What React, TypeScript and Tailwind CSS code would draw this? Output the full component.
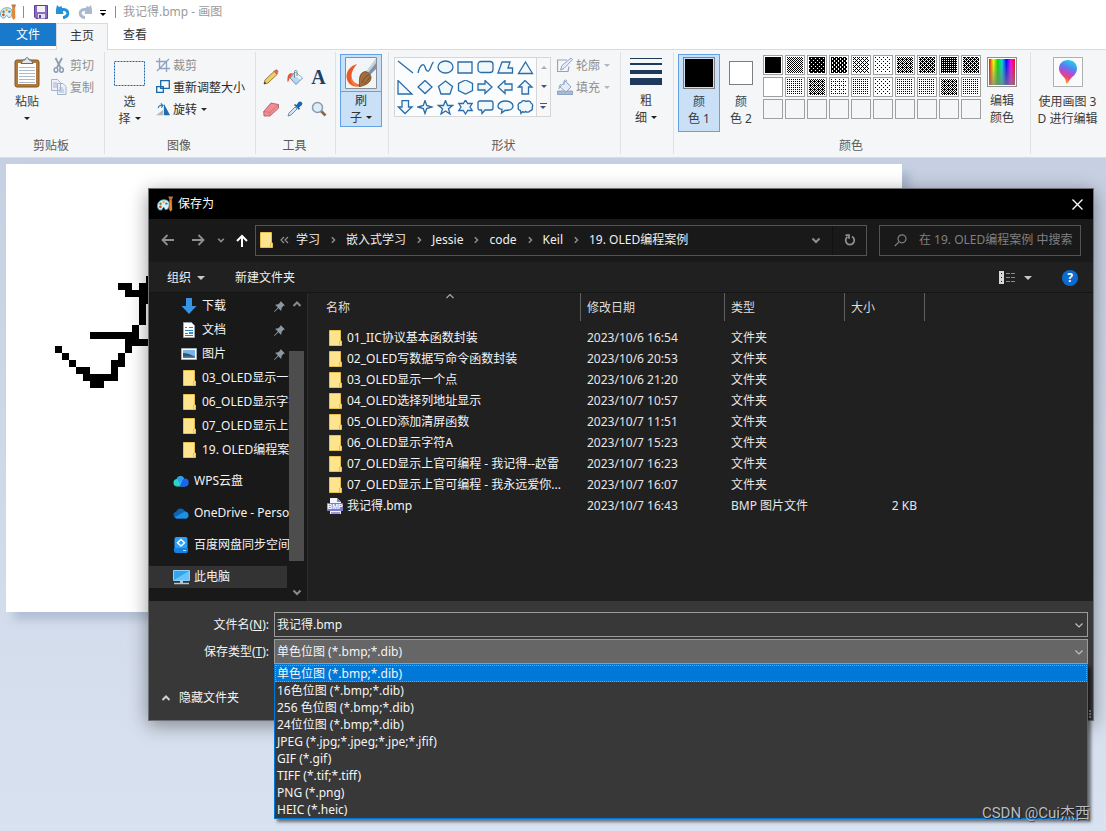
import React, { useState } from "react";

const FONT = "font-['Noto_Sans','Noto_Sans_CJK_SC',sans-serif]";

/* ---------- small shared pieces ---------- */

function Caret({ className = "", large }: { className?: string; large?: boolean }) {
  return (
    <svg viewBox="0 0 6 3" className={"shrink-0 " + (large ? "h-1 w-2 " : "h-[3px] w-[6px] ") + className} aria-hidden="true">
      <path d="M0 0h6L3 3z" fill="currentColor" />
    </svg>
  );
}

function Chevron({ dir, className = "", width = 2, small }: { dir: "up" | "down" | "right"; className?: string; width?: number; small?: boolean }) {
  const d = dir === "up" ? "M1.500 7l3.500-3.500L8.500 7" : dir === "down" ? "M1.500 3.500L5 7l3.500-3.500" : "M3.500 1.500L7 5 3.500 8.500";
  return (
    <svg viewBox="0 0 10 10" className={"shrink-0 " + (small ? "h-2 w-2 " : "h-[10px] w-[10px] ") + className} aria-hidden="true">
      <path d={d} fill="none" stroke="currentColor" strokeWidth={width} />
    </svg>
  );
}

function PaletteIcon() {
  return (
    <svg viewBox="0 0 17 16" className="h-4 w-4 shrink-0" aria-hidden="true">
      <path d="M.5 10c0-4.500 3.700-6.500 7-6.500s5.500 1.500 5.500 4.500c0 4-1.500 6-3.500 6-1.800 0-1-2.300-2.500-2.300s-.9 2.800-2.700 2.800C2 14.500.5 13 .5 10z" fill="#d9f0f8" stroke="#4f9bbd" strokeWidth=".9" />
      <circle cx="3.600" cy="11" r="1.400" fill="#e2432e" />
      <circle cx="3.800" cy="7.800" r="1.300" fill="#3fa63b" />
      <circle cx="7" cy="5.800" r="1.300" fill="#f2b01e" />
      <circle cx="10" cy="7.600" r="1.300" fill="#3d7dd0" />
      <path d="M12 0h5l-1 3.500h-2.800z" fill="#b77a48" />
      <path d="M13.300 3.500h2.400l.3 10.500-1.500 2-1.500-2z" fill="#ee8a24" stroke="#bd5b12" strokeWidth=".4" />
    </svg>
  );
}

function Folder() {
  return (
    <svg viewBox="0 0 13 16" className="h-4 w-[13px] shrink-0" aria-hidden="true">
      <path d="M.5.5h11v10.500h1v4.500H.5z" fill="#ffe48f" stroke="#e7bf4b" />
      <path d="M10.500 11v4.500" stroke="#e7bf4b" />
    </svg>
  );
}

/* ---------- ribbon ---------- */

function Group({ label, width, children }: { label?: string; width: string; children: React.ReactNode }) {
  return (
    <section className={"flex h-[102px] shrink-0 flex-col border-r border-[#e0e1e3] " + width}>
      <div className="flex flex-1">{children}</div>
      <div className="h-[18px] pr-[2px] text-center leading-5 text-[#5a5a5a]">{label}</div>
    </section>
  );
}

function SmallButton({ icon, text, disabled, caret }: { icon: React.ReactNode; text: string; disabled?: boolean; caret?: boolean }) {
  return (
    <button type="button" disabled={disabled} className={"flex h-[22px] items-center gap-[3px] whitespace-nowrap " + (disabled ? "text-[#8e8f91]" : "text-[#2b2b2b]")}>
      {icon}
      {text}
      {caret && <Caret className="ml-px" />}
    </button>
  );
}

const blue = { fill: "#f1f8fc", stroke: "#2a6ca8", strokeWidth: 1.3 } as const;

const SHAPES: { name: string; el: React.ReactNode }[] = [
  { name: "直线", el: <path d="M1 1l15 12" /> },
  { name: "曲线", el: <path d="M1 13C3 4 7 3 8 7s3 6 5 2 2-6 3.500-7" fill="none" /> },
  { name: "椭圆形", el: <ellipse cx="8.500" cy="7" rx="7.500" ry="6" /> },
  { name: "矩形", el: <path d="M1 2h14v11H1z" /> },
  { name: "圆角矩形", el: <rect x="1" y="1.500" width="15" height="11" rx="3" /> },
  { name: "多边形", el: <path d="M5 2h8l-2 6h4.500v5H1z" /> },
  { name: "三角形", el: <path d="M8.500 2l7 11.500h-14z" /> },
  { name: "直角三角形", el: <path d="M1 .5v13.500h14z" /> },
  { name: "菱形", el: <path d="M8 .5l7 6.500-7 6.500L1 7z" /> },
  { name: "五边形", el: <path d="M8.500 1l7 5.500L13 14H4L1.500 6.500z" /> },
  { name: "六边形", el: <path d="M8.500 0l7 3.500v7l-7 3.500-7-3.500v-7z" /> },
  { name: "右箭头", el: <path d="M1 4h7V.5L15 7l-7 6.500V10H1z" /> },
  { name: "左箭头", el: <path d="M15 4H8V.5L1 7l7 6.500V10h7z" /> },
  { name: "向上箭头", el: <path d="M5 14V7H1.500L8 .5 15 7h-3.500v7z" /> },
  { name: "向下箭头", el: <path d="M5 .5V7H1.500L8 13.500 15 7h-3.500V.5z" /> },
  { name: "四角星形", el: <path d="M8 .5l1.700 5L15 7l-5.300 1.500-1.700 5-1.700-5L1 7l5.300-1.500z" /> },
  { name: "五角星形", el: <path d="M8.500.5l2 5h5l-4 3.200 1.500 5.300-4.500-3L4 14l1.500-5.300-4-3.200h5z" /> },
  { name: "六角星形", el: <path d="M8.500 0l2.200 3.500h4.500L13 7l2.200 3.500h-4.500L8.500 14l-2.200-3.500H1.800L4 7 1.800 3.500h4.500z" /> },
  { name: "圆角矩形标注", el: <path d="M3 1h11q2 0 2 2v5q0 2-2 2H8l-3 3.500L4.500 10H3q-2 0-2-2V3q0-2 2-2z" /> },
  { name: "椭圆形标注", el: <path d="M4.500 13l.5-3.500C2.500 9 1 7.500 1 6c0-3 3.500-5 7.500-5S16 3 16 6s-3.500 4.500-8 4.500z" /> },
  { name: "云形标注", el: <path d="M4 2.500C5.500 0 8 .5 9 1.500c2-1 4.500-.5 5 1.500 2 1 2 3 1.200 4.200.8 2-.7 3.600-2.200 3.600-1 1.700-3.500 1.700-4.500.7-1 .9-2.500.7-3.200.1L4 13.500l-.7-3C1.500 10 .5 8.500 1.500 7 .5 5 1.500 2.700 4 2.500z" /> },
];

/* 4x4 dither tiles; "1" is ink */
const TILES = [
  "1111111111111111",
  "1010010110100101",
  "1111110111110111",
  "1110101110111110",
  "1010010010100001",
  "1000000000100000",
  "1010010111100101",
  "1011010111100101",
  "1111101011111010",
  "1110010110110101",
  "0000000000000000",
  "1010000010100000",
  "1010010111100101",
  "1000000010100000",
  "1010000010100000",
  "1000000000100000",
  "1010000010100000",
  "1010000010100000",
  "1010010110110101",
  "1010000010100000",
];

function Swatch({ tile, id }: { tile?: string; id: number }) {
  return (
    <button type="button" aria-label={"颜色 " + (id + 1)} className={"flex h-5 w-5 items-center justify-center border border-[#a0a0a0] " + (tile ? "bg-white" : "bg-[#f5f6f7]")}>
      {tile && (
        <svg viewBox="0 0 16 16" className="h-4 w-4" shapeRendering="crispEdges" aria-hidden="true">
          <defs>
            <pattern id={"dither" + id} width="4" height="4" patternUnits="userSpaceOnUse">
              {tile.split("").map((c, i) => (c === "1" ? <rect key={i} x={i % 4} y={Math.floor(i / 4)} width="1" height="1" fill="#000" /> : null))}
            </pattern>
          </defs>
          <rect width="16" height="16" fill={"url(#dither" + id + ")"} />
        </svg>
      )}
    </button>
  );
}

function Ribbon() {
  return (
    <div className="flex overflow-hidden border-y border-[#dadbdc] bg-[#f5f6f7] pb-[3px] pt-[2px] leading-[17px] text-[#3b3b3b]">
      <Group label="剪贴板" width="w-[105px]">
        <button type="button" className="ml-[6px] flex w-[42px] flex-col items-center pt-[5px]">
          <svg viewBox="0 0 26 31" className="h-[31px] w-[26px]" aria-hidden="true">
            <rect x="1" y="3" width="24" height="27" rx="2" fill="#b07a3c" stroke="#845620" />
            <path d="M4 6h18v21H4z" fill="#fff" />
            <path d="M5 10.500h16M5 13.500h16M5 16.500h16M5 19.500h16M5 22.500h16M5 25.500h16" stroke="#a9bccb" />
            <path d="M7 6.500h12L17 3h-2c0-3-4-3-4 0H9z" fill="#e4e6e8" stroke="#666b70" />
          </svg>
          <span className="mt-[5px]">粘贴</span>
          <Caret className="mt-[7px] text-[#222]" />
        </button>
        <div className="ml-[3px] pt-[2px]">
          <SmallButton disabled text="剪切" icon={
            <svg viewBox="0 0 16 16" className="h-4 w-4" fill="none" stroke="#8d9cb4" aria-hidden="true">
              <path d="M4.500 1l5 9.500M11 1l-5 9.500" strokeWidth="1.800" />
              <ellipse cx="5" cy="13" rx="1.800" ry="2.200" strokeWidth="1.500" /><ellipse cx="10.500" cy="13" rx="1.800" ry="2.200" strokeWidth="1.500" />
            </svg>} />
          <SmallButton disabled text="复制" icon={
            <svg viewBox="0 0 16 16" className="h-4 w-4" fill="#eef2f8" stroke="#a3b3cd" aria-hidden="true">
              <path d="M.5.5h6l3 3v8h-9zM6.500 4.500h5.500l3 3v8H6.500z" />
              <path d="M2 4h4M2 6h4M2 8h4M8 9h4M8 11h5M8 13h5" />
            </svg>} />
        </div>
      </Group>

      <Group label="图像" width="w-[151px]">
        <button type="button" className="ml-[9px] flex w-[31px] flex-col items-center pt-[9px]">
          <svg viewBox="0 0 31 25" className="h-[25px] w-[31px]" aria-hidden="true">
            <path d="M.5.5h30v24H.5z" fill="none" stroke="#1a66a8" strokeDasharray="2 1" />
          </svg>
          <span className="mt-[7px]">选</span>
          <span className="flex items-center gap-1">择<Caret className="text-[#222]" /></span>
        </button>
        <div className="ml-[11px] pt-[2px]">
          <SmallButton disabled text="裁剪" icon={
            <svg viewBox="0 0 14 14" className="h-[14px] w-[14px]" fill="none" stroke="#8da3c2" strokeWidth="1.300" aria-hidden="true">
              <path d="M0 3.500h10.500V14M3.500 0v10.500H14M1 13L13 1" />
            </svg>} />
          <SmallButton text="重新调整大小" icon={
            <svg viewBox="0 0 14 14" className="h-[14px] w-[14px]" fill="#f5f9fc" stroke="#1a66a8" strokeWidth="1.300" aria-hidden="true">
              <path d="M.7 6.700h6.600v5.600H.7zM4.700.7h8.600v7.600H4.700z" />
            </svg>} />
          <SmallButton text="旋转" caret icon={
            <svg viewBox="0 0 16 14" className="h-[14px] w-[14px]" aria-hidden="true">
              <path d="M0 14l8-6v6z" fill="#b5b9bd" /><path d="M9 1v13h7z" fill="#1d6db0" />
              <path d="M2.500 6C3 3 5 2.500 7 3M5.500.5L8 3 6 5.500" fill="none" stroke="#2a7dc4" strokeWidth="1.300" />
            </svg>} />
        </div>
      </Group>

      <Group label="工具" width="w-[80px]">
        <div className="ml-[3px] grid h-16 grid-cols-3 pt-[9px]">
          <button type="button" aria-label="铅笔" className="flex h-8 w-[23px] items-center justify-center">
            <svg viewBox="0 0 16 16" className="h-4 w-4" aria-hidden="true">
              <path d="M1 15l1-4L11.500 2l3 3L5 14z" fill="#f2cf66" stroke="#7d6330" strokeWidth=".8" />
              <path d="M11 2.500L12.500 1q1-.8 2 .3t.3 2L13.500 5z" fill="#e0686a" stroke="#a44" strokeWidth=".5" />
              <path d="M1 15l.7-2.300 1.600 1.600z" fill="#222" />
            </svg>
          </button>
          <button type="button" aria-label="用颜色填充" className="flex h-8 w-6 items-center justify-center">
            <svg viewBox="0 0 16 16" className="h-4 w-4" aria-hidden="true">
              <path d="M8 3l7.500 6L9 15.500 3 9z" fill="#b8d6ee" stroke="#5a87ad" strokeWidth=".9" />
              <path d="M8.500 3.600l6.500 5.200-2 2-6.500-5.200z" fill="#eaf4fb" />
              <path d="M7.500 8.500V2.500q1.200-3 2.500 0V7" fill="none" stroke="#77838e" />
              <path d="M6 4.500C2.500 3.500 0 5 .5 13c1.500 0 1.700-3.500 2.500-4.500z" fill="#e8552c" />
            </svg>
          </button>
          <button type="button" aria-label="文本" className="flex h-8 w-[23px] items-center justify-center font-['Liberation_Serif',serif] text-[20px] font-bold text-[#1f3f66]">A</button>
          <button type="button" aria-label="橡皮擦" className="flex h-8 w-[23px] items-center justify-center">
            <svg viewBox="0 0 16 16" className="h-4 w-4" aria-hidden="true">
              <path d="M.7 10.500L8 2l7.500 1.500v3.700L7 15H1z" fill="#ef8e92" stroke="#b0555a" strokeWidth=".8" />
              <path d="M.7 10.500l6.300.8 8.500-7.800M7 11.300V15" fill="none" stroke="#c76a6e" strokeWidth=".7" />
            </svg>
          </button>
          <button type="button" aria-label="颜色选取器" className="flex h-8 w-6 items-center justify-center">
            <svg viewBox="0 0 16 16" className="h-4 w-4" aria-hidden="true">
              <path d="M1 15l1-3 6-6 2 2-6 6z" fill="#d3e6f5" stroke="#56799a" strokeWidth=".8" />
              <path d="M7 4l5 5 1-1.500-1-1L15 4q1-2-.5-3T11.500 1L9.500 4 8 3z" fill="#1d66ae" />
            </svg>
          </button>
          <button type="button" aria-label="放大镜" className="flex h-8 w-[23px] items-center justify-center">
            <svg viewBox="0 0 16 16" className="h-4 w-4" aria-hidden="true">
              <path d="M10 10l4.500 4.500" stroke="#8a6646" strokeWidth="2.600" />
              <circle cx="6.500" cy="6.500" r="5" fill="#dbeefa" stroke="#8b9cb0" strokeWidth="1.500" />
            </svg>
          </button>
        </div>
      </Group>

      <Group width="w-[53px]">
        <button type="button" className="ml-1 mt-[2px] flex h-[73px] w-[42px] flex-col items-center border border-[#62a2e4] bg-[#c9e0f7]">
          <span className="flex h-[37px] w-full items-center justify-center border-b border-[#62a2e4]">
            <svg viewBox="0 0 32 32" className="h-8 w-8" aria-hidden="true">
              <path d="M.5.5h31v31H.5z" fill="#f1f5f7" stroke="#8b8f93" />
              <path d="M12 7C5 9 1.500 14 1.500 20c.5 5 4 9 9 9.500 2 .3 5 0 6-2-5 0-10-2.500-10-8C6.500 14 9 11 12 7z" fill="#ea5a27" />
              <path d="M6.500 19.500C7 25 11 27.500 17 28l-6 1.500C7 28 5 24 6.500 19.500z" fill="#f47a42" />
              <path d="M31 2v10l-6 6-4-3z" fill="#8092a8" /><path d="M31 2L21 15l2 1 8-10z" fill="#c9d3de" />
              <path d="M20 14.500c3 .5 6 3 6 6 0 5-6 8.500-12 9 1.500-3-2-13 6-15z" fill="#a06f3c" stroke="#6d4620" strokeWidth=".8" />
              <path d="M17 26c2-5 4-7 7-8M19 27c3-3 5-5 6-7" stroke="#6d4620" fill="none" strokeWidth=".8" />
            </svg>
          </span>
          <span className="text-[#333]">刷</span>
          <span className="flex items-center gap-1 text-[#333]">子<Caret className="text-[#222]" /></span>
        </button>
      </Group>

      <Group label="形状" width="w-[232px]">
        <div className="ml-[5px] mt-[5px] flex h-[60px] w-[157px] border border-[#d5d6d8] bg-[#fbfcfd]">
          <div className="grid grid-cols-7 grid-rows-[20px_20px_19px]">
            {SHAPES.map((s) => (
              <button type="button" key={s.name} aria-label={s.name} className="flex h-[19px] w-5 items-center justify-center">
                <svg viewBox="0 0 17 15" className="h-[15px] w-[17px]" {...blue} aria-hidden="true">{s.el}</svg>
              </button>
            ))}
          </div>
          <div className="ml-auto flex w-[14px] flex-col items-center justify-between border-l border-[#d5d6d8] bg-[#f8f8f9] pb-[7px] pt-2 text-[#41597c]">
            <Caret className="rotate-180 text-[#a9adb3]" />
            <Caret />
            <span className="w-[7px] border-t border-[#41597c] pt-[2px]"><Caret /></span>
          </div>
        </div>
        <div className="ml-[6px] pt-[2px]">
          {["轮廓", "填充"].map((t, i) => (
            <button type="button" disabled key={t} className="flex h-[22px] items-center text-[#8e8f91]">
              <svg viewBox="0 0 16 16" className="mr-[3px] h-4 w-4" fill="#e6edf6" stroke="#8fa3c2" aria-hidden="true">
                {i === 0 ? (
                  <><path d="M10 3H.5v11.500H11l1-5" fill="none" strokeWidth="1.200" /><path d="M3.500 13l1.500-4.500L14 1l1.500 1.500-8.500 9z" /></>
                ) : (
                  <><path d="M.5 12h15v3.500H.5z" fill="#a9b9d4" /><path d="M8.500 2L14 8l-5 5-6-5z" /><path d="M7 6V2q1.500-2 3 0M4 5q-2 1-2 5" fill="none" /></>
                )}
              </svg>
              {t}<Caret className="ml-1 text-[#b3b5b8]" />
            </button>
          ))}
        </div>
      </Group>

      <Group width="w-[53px]">
        <button type="button" className="ml-2 flex w-[34px] flex-col items-center pt-[6px]">
          <svg viewBox="0 0 32 27" className="h-[27px] w-8" fill="#1e395b" aria-hidden="true">
            <path d="M0 0h32v1H0zM0 5h32v2H0zM0 12h32v4H0zM0 20h32v7H0z" />
          </svg>
          <span className="mt-[7px]">粗</span>
          <span className="flex items-center gap-1">细<Caret className="text-[#222]" /></span>
        </button>
      </Group>

      <Group label="颜色" width="w-[357px]">
        <button type="button" className="ml-1 mt-[2px] flex h-[78px] w-[42px] flex-col items-center border border-[#62a2e4] bg-[#c9e0f7] pt-[2px]">
          <span className="h-8 w-8 border border-[#7e7e7e] bg-[#c9e0f7] p-px"><span className="block h-full bg-black" /></span>
          <span className="mt-1">颜</span>
          <span>色 1</span>
        </button>
        <button type="button" className="ml-1 flex w-[34px] flex-col items-center pt-[9px]">
          <span className="h-6 w-6 border border-[#7e7e7e] bg-white" />
          <span className="mt-2">颜</span>
          <span>色 2</span>
        </button>
        <div className="ml-[5px] mt-[3px] grid h-16 grid-cols-10 gap-[2px]">
          {Array.from({ length: 30 }, (_, i) => <Swatch key={i} id={i} tile={TILES[i]} />)}
        </div>
        <button type="button" className="ml-1 flex w-[34px] flex-col items-center pt-[5px]">
          <span className="border border-[#8f8f8f] bg-white p-px">
            <span className="block h-[26px] w-[26px] bg-[linear-gradient(to_bottom,transparent,rgba(128,128,128,0.75)),linear-gradient(to_right,#f00,#ff0_17%,#0d0_33%,#0dd_50%,#00f_67%,#f0f_84%,#f00)]" />
          </span>
          <span className="mt-[5px]">编辑</span>
          <span>颜色</span>
        </button>
      </Group>

      <button type="button" className="flex min-w-[73px] flex-1 flex-col items-center whitespace-nowrap pr-[2px] pt-[5px]">
        <span className="flex h-[30px] w-[30px] items-center justify-center border border-[#b0b0b0] bg-[#fbfbfb]">
          <svg viewBox="0 0 18 24" className="h-6 w-[18px]" aria-hidden="true">
            <defs>
              <linearGradient id="drop" x1="0.700" y1="0" x2="0.350" y2="1">
                <stop offset="0" stopColor="#16d8ee" /><stop offset=".35" stopColor="#5b7cf0" /><stop offset=".55" stopColor="#b64bd0" /><stop offset=".72" stopColor="#f2436c" /><stop offset="1" stopColor="#ffb400" />
              </linearGradient>
            </defs>
            <path d="M9 0c5 0 9 3.500 9 8.500 0 6-5 8-7 11-1 1.500-2 3-3.500 4.500-.8-2-.5-4-2-6C3.500 15.500 0 13 0 8.500 0 3.500 4 0 9 0z" fill="url(#drop)" />
          </svg>
        </span>
        <span className="mt-[6px]">使用画图 3</span>
        <span>D 进行编辑</span>
      </button>
    </div>
  );
}

function TitleBar() {
  return (
    <header className="flex h-[23px] items-center bg-white">
      <PaletteIcon />
      <span className="ml-[7px] h-3 w-px bg-[#8c8c8c]" />
      <button type="button" aria-label="保存" className="ml-[10px]">
        <svg viewBox="0 0 14 14" className="h-[14px] w-[14px]" aria-hidden="true">
          <path d="M.5.5h13v13H2l-1.500-1.500z" fill="#8b6cc4" stroke="#5c3f99" /><path d="M3 1h8v6H3z" fill="#f2f2f6" /><path d="M4 9h7v4.500H4z" fill="#e3e1ea" /><path d="M5 10h2v3H5z" fill="#5c3f99" />
        </svg>
      </button>
      <button type="button" aria-label="撤消" className="ml-2">
        <svg viewBox="0 0 14 14" className="h-[14px] w-[14px]" aria-hidden="true">
          <path d="M3 4.500h4.500q4.700.3 4.200 4.500Q11.200 12 7 12.700" fill="none" stroke="#2492d8" strokeWidth="3" /><path d="M0 4.500L1 0l2 2 2.500-1 2 8H0z" fill="#2492d8" />
        </svg>
      </button>
      <button type="button" aria-label="重做" className="ml-2">
        <svg viewBox="0 0 14 14" className="h-[14px] w-[14px] -scale-x-100" aria-hidden="true">
          <path d="M3 4.500h4.500q4.700.3 4.200 4.500Q11.200 12 7 12.700" fill="none" stroke="#a9b9cf" strokeWidth="3" /><path d="M0 4.500L1 0l2 2 2.500-1 2 8H0z" fill="#a9b9cf" />
        </svg>
      </button>
      <button type="button" aria-label="自定义快速访问工具栏" className="ml-2 mt-[3px] border-t border-black pt-[2px]"><Caret className="text-black" /></button>
      <span className="ml-[9px] h-3 w-px bg-[#8c8c8c]" />
      <h1 className="ml-[7px] text-[#9a9a9a]">我记得.bmp - 画图</h1>
    </header>
  );
}

function Tabs() {
  return (
    <nav className="flex h-[26px] bg-white text-[#333]">
      <button type="button" className="h-[23px] w-14 bg-[#1979ca] text-white">文件</button>
      <button type="button" className="relative z-10 -mb-px h-[27px] w-[52px] border border-b-0 border-[#dadbdc] bg-[#f5f6f7] pb-[2px]">主页</button>
      <button type="button" className="h-[26px] w-[54px] pb-[2px]">查看</button>
    </nav>
  );
}

/* ---------- canvas ---------- */

/* [column, row, width, height] on the 128 x 64 bitmap */
const INK = [
  [20, 16, 1, 1], [16, 17, 2, 1], [19, 17, 2, 1], [17, 18, 4, 1], [19, 19, 2, 1], [19, 20, 1, 3],
  [18, 23, 1, 1], [12, 24, 7, 1], [17, 25, 4, 1], [7, 26, 1, 1], [17, 26, 1, 1], [8, 27, 1, 1],
  [16, 27, 1, 1], [9, 28, 1, 1], [15, 28, 2, 1], [10, 29, 2, 1], [15, 29, 1, 1], [11, 30, 5, 1], [12, 31, 2, 1],
];

function Canvas() {
  return (
    <main className="flex-1 bg-linear-to-b from-[#c6d0e2] to-[#d9e2f0] pl-[6px] pt-[6px]">
      <svg viewBox="0 0 128 64" className="block h-[448px] w-[896px] bg-white shadow-[8px_8px_8px_rgba(120,140,170,0.35)]" shapeRendering="crispEdges" role="img" aria-label="画布">
        {INK.map(([x, y, w, h]) => <rect key={x + "-" + y} x={x} y={y} width={w} height={h} />)}
      </svg>
    </main>
  );
}

/* ---------- save dialog ---------- */

const CRUMBS = ["学习", "嵌入式学习", "Jessie", "code", "Keil", "19. OLED编程案例"];

function AddressBar() {
  return (
    <div className="flex h-[43px] items-center bg-[#191919] pb-[3px] pl-1 pr-3 pt-[2px] text-[#8f8f8f]">
      <button type="button" aria-label="后退" className="flex w-[30px] justify-center">
        <svg viewBox="0 0 14 12" className="h-3 w-[14px]" fill="none" stroke="currentColor" strokeWidth="1.800" aria-hidden="true"><path d="M13 6H2M6.500 1l-5 5 5 5" /></svg>
      </button>
      <button type="button" aria-label="前进" className="flex w-[30px] justify-center">
        <svg viewBox="0 0 14 12" className="h-3 w-[14px]" fill="none" stroke="currentColor" strokeWidth="1.800" aria-hidden="true"><path d="M1 6h11M7.500 1l5 5-5 5" /></svg>
      </button>
      <button type="button" aria-label="最近浏览的位置" className="flex w-4 justify-center"><Chevron dir="down" small /></button>
      <button type="button" aria-label="上移" className="flex w-[26px] justify-center text-white">
        <svg viewBox="0 0 12 13" className="h-[13px] w-3" fill="none" stroke="currentColor" strokeWidth="2" aria-hidden="true"><path d="M6 13V2M1 7l5-5 5 5" /></svg>
      </button>
      <div className="flex h-[31px] min-w-0 flex-1 items-center border border-[#535353] pl-1 text-[#f0f0f0]">
        <Folder />
        <span className="flex w-[23px] justify-center text-[#8f8f8f]">
          <svg viewBox="0 0 9 8" className="h-2 w-[9px]" fill="none" stroke="currentColor" strokeWidth="1.200" aria-hidden="true"><path d="M4 1L1 4l3 3M8 1L5 4l3 3" /></svg>
        </span>
        {CRUMBS.map((c, i) => (
          <React.Fragment key={c}>
            {i > 0 && <span className="flex w-[26px] justify-center text-[#8f8f8f]"><Chevron dir="right" small width={1.800} /></span>}
            <button type="button" className="whitespace-nowrap">{c}</button>
          </React.Fragment>
        ))}
        <button type="button" aria-label="以前的位置" className="ml-auto flex w-8 justify-center text-[#8f8f8f]"><Chevron dir="down" /></button>
        <button type="button" aria-label="刷新" className="flex h-full w-[34px] items-center justify-center border-l border-[#111] text-[#8f8f8f]">
          <svg viewBox="0 0 12 12" className="h-3 w-3" fill="none" stroke="currentColor" strokeWidth="1.800" aria-hidden="true"><path d="M8 2.500a4.300 4.300 0 1 1-4.500.3M1.500 1.200h3.500v3.600" /></svg>
        </button>
      </div>
      <label className="ml-3 flex h-[31px] w-[202px] items-center border border-[#535353] pl-[14px] text-[#808080]">
        <svg viewBox="0 0 13 13" className="mr-3 h-[13px] w-[13px] shrink-0" fill="none" stroke="currentColor" strokeWidth="1.200" aria-hidden="true"><circle cx="8" cy="4.800" r="4" /><path d="M5 7.800L.8 12" /></svg>
        <input type="text" role="searchbox" aria-label="搜索" placeholder="在 19. OLED编程案例 中搜索" className="w-0 min-w-0 flex-1 bg-transparent outline-none placeholder:text-[#808080]" />
      </label>
    </div>
  );
}

function Toolbar() {
  return (
    <div className="flex h-[31px] items-center border-b border-[#151515] bg-[#202020] pl-[18px] pr-[15px] pt-px text-[#f0f0f0]">
      <button type="button" className="flex items-center gap-[6px]">组织<Caret large className="text-[#c8c8c8]" /></button>
      <button type="button" className="ml-[30px]">新建文件夹</button>
      <button type="button" aria-label="更改视图" className="ml-auto flex items-center gap-[9px]">
        <svg viewBox="0 0 16 13" className="h-[13px] w-4" aria-hidden="true">
          <path d="M0 0h5v13H0z" fill="#d8d8d8" /><path d="M2 2h1v1H2zM2 6h1v1H2zM2 10h1v1H2z" fill="#222" />
          <path d="M7 2.500h4M12 2.500h4M7 6.500h4M12 6.500h4M7 10.500h4M12 10.500h4" stroke="#8c8c8c" />
        </svg>
        <Caret large className="text-[#c8c8c8]" />
      </button>
      <button type="button" aria-label="帮助" className="ml-[30px] flex h-4 w-4 items-center justify-center rounded-full bg-[#0a6cd0] text-[12px] font-bold text-white">?</button>
    </div>
  );
}

function Pin() {
  return (
    <svg viewBox="0 0 10 10" className="ml-auto mr-1 h-[11px] w-[11px] shrink-0" aria-hidden="true">
      <path d="M6 0l4 4-1.300.4L7 6.200 6.500 9 4 6.500.5 10 0 9.500 3.500 6 1 3.500 3.800 3 5.600 1.300z" fill="#8b98a3" />
    </svg>
  );
}

const PINNED: { text: string; icon: React.ReactNode; pin?: boolean }[] = [
  { text: "下载", pin: true, icon: <svg viewBox="0 0 16 16" className="h-4 w-4" aria-hidden="true"><path d="M5 0h6v8h4.500L8 16 .5 8H5z" fill="#3595e3" /></svg> },
  { text: "文档", pin: true, icon: <svg viewBox="0 0 16 16" className="h-4 w-4" aria-hidden="true"><path d="M2.500.5h8l3 3v12h-11z" fill="#fff" stroke="#9aa3aa" /><path d="M4 5.500h2M4 8.500h8M4 11.500h3M4 13.500h8M8 5.500h4" stroke="#2a7fc0" /><path d="M8 10h4v2H8z" fill="#3a8ccc" /></svg> },
  { text: "图片", pin: true, icon: <svg viewBox="0 0 16 12" className="h-3 w-4" aria-hidden="true"><path d="M.5.5h15v11H.5z" fill="#fff" stroke="#a9b0b6" /><path d="M2 2h12v8H2z" fill="#7db5e8" /><path d="M2 5q6 0 12 4v1H2z" fill="#2c5a68" /><path d="M2 8.500h12V10H2z" fill="#4f7fb5" /></svg> },
  { text: "03_OLED显示一个点", icon: <Folder /> },
  { text: "06_OLED显示字符A", icon: <Folder /> },
  { text: "07_OLED显示上官可编程", icon: <Folder /> },
  { text: "19. OLED编程案例", icon: <Folder /> },
];

const PLACES: { text: string; icon: React.ReactNode; active?: boolean }[] = [
  { text: "WPS云盘", icon: <svg viewBox="0 0 16 12" className="h-3 w-4" aria-hidden="true"><path d="M4 11.500a3.800 3.800 0 0 1-.5-7.500A4 4 0 0 1 11 3.500l1 8z" fill="#2bd4c8" /><path d="M6 11.500C9 9 8 4 11.500 3.500a4 4 0 0 1 .5 8z" fill="#1d63ef" /><path d="M4 3.500Q6 0 9 1.500q2 1 2 2.500-3 0-4 5z" fill="#2b9df4" /></svg> },
  { text: "OneDrive - Personal", icon: <svg viewBox="0 0 17 11" className="h-[11px] w-[17px]" aria-hidden="true"><path d="M3.500 10.500A3.500 3.500 0 0 1 3 3.700 5 5 0 0 1 12 3l2 7.500z" fill="#0d62b4" /><path d="M1.500 9.500L9 5l3-1.500a3.700 3.700 0 0 1 1.500 7h-10z" fill="#1f8fe0" /></svg> },
  { text: "百度网盘同步空间", icon: <svg viewBox="0 0 14 16" className="ml-px h-4 w-[14px]" aria-hidden="true"><rect x=".5" width="13" height="12" rx="2" fill="#2aa0fb" /><path d="M0 11h14v3q0 2-2 2H2q-2 0-2-2z" fill="#1681e0" /><path d="M7 2.500l3.500 3.300L7 9 3.500 5.800z" fill="none" stroke="#fff" strokeWidth="1.400" /><path d="M9 13.500h3" stroke="#9fe8ff" /></svg> },
  { text: "此电脑", active: true, icon: <svg viewBox="0 0 17 15" className="h-[15px] w-[17px]" aria-hidden="true"><path d="M.5.5h16v10H.5z" fill="#35a4f0" stroke="#8fd2fb" /><path d="M1 10L16 1v9z" fill="#66c3fb" /><path d="M7 11h3v2H7z" fill="#b9c4cc" /><path d="M1 13.500h15" stroke="#b9c4cc" strokeWidth="1.500" /></svg> },
];

function Sidebar() {
  return (
    <aside className="flex w-[159px] shrink-0 border-r border-[#2d2d2d] bg-[#191919] text-[#f4f4f4]">
      <div className="w-[140px] overflow-hidden whitespace-nowrap pt-px">
        {PINNED.map((p) => (
          <a href="#" key={p.text} className="flex h-6 items-center pl-8">
            <span className="mr-[5px] flex w-4 shrink-0 items-center justify-center">{p.icon}</span>{p.text}{p.pin && <Pin />}
          </a>
        ))}
        <div className="flex flex-col gap-[10px] pt-2">
          {PLACES.map((p) => (
            <a href="#" key={p.text} className={"flex h-[22px] items-center pl-6 " + (p.active ? "mr-[2px] bg-[#333333]" : "")}>
              <span className="flex w-[21px] shrink-0 items-center">{p.icon}</span>{p.text}
            </a>
          ))}
        </div>
      </div>
      <div className="flex w-[15px] flex-col items-center pb-1 pt-[6px] text-[#8a8a8a]">
        <Chevron dir="up" />
        <div className="mb-[26px] mt-[42px] w-full flex-1 bg-[#4d4d4d]" />
        <Chevron dir="down" />
      </div>
    </aside>
  );
}

const FILES = [
  ["01_IIC协议基本函数封装", "2023/10/6 16:54", "文件夹", ""],
  ["02_OLED写数据写命令函数封装", "2023/10/6 20:53", "文件夹", ""],
  ["03_OLED显示一个点", "2023/10/6 21:20", "文件夹", ""],
  ["04_OLED选择列地址显示", "2023/10/7 10:57", "文件夹", ""],
  ["05_OLED添加清屏函数", "2023/10/7 11:51", "文件夹", ""],
  ["06_OLED显示字符A", "2023/10/7 15:23", "文件夹", ""],
  ["07_OLED显示上官可编程 - 我记得--赵雷", "2023/10/7 16:23", "文件夹", ""],
  ["07_OLED显示上官可编程 - 我永远爱你...", "2023/10/7 16:07", "文件夹", ""],
  ["我记得.bmp", "2023/10/7 16:43", "BMP 图片文件", "2 KB"],
];

function BmpIcon() {
  return (
    <span className="relative flex h-4 w-4 shrink-0 items-center">
      <svg viewBox="0 0 16 16" className="h-4 w-4" aria-hidden="true">
        <path d="M3 0h7l4 4v12H3z" fill="#f3f3fb" /><path d="M10 0l4 4h-4z" fill="#8683c9" /><path d="M0 5h16v8H0z" fill="#7f7cc6" /><path d="M4 14h9v2H4z" fill="#9c99d8" />
      </svg>
      <span className="absolute inset-x-0 top-[5px] text-center font-['Liberation_Sans',sans-serif] text-[7px] font-bold leading-[8px] text-white">BMP</span>
    </span>
  );
}

function FileList() {
  const head = "h-7 border-r border-[#5f5f5f] leading-[30px]";
  return (
    <div className="min-w-0 flex-1 bg-[#202020] text-[#e6e6e6]">
      <table className="w-full table-fixed border-collapse whitespace-nowrap text-left">
        <colgroup>
          <col className="w-[273px]" /><col className="w-[144px]" /><col className="w-[120px]" /><col className="w-20" /><col />
        </colgroup>
        <thead>
          <tr className="h-[34px] align-top text-[#dedede]">
            <th className="p-0 font-normal">
              <div className={head + " relative pl-[18px]"}>名称<Chevron dir="up" width={1.200} className="absolute left-[137px] top-[-2px] text-[#a8a8a8]" /></div>
            </th>
            <th className="p-0 font-normal"><div className={head + " pl-[6px]"}>修改日期</div></th>
            <th className="p-0 font-normal"><div className={head + " pl-[6px]"}>类型</div></th>
            <th className="p-0 font-normal"><div className={head + " pl-[6px]"}>大小</div></th>
            <td className="p-0" />
          </tr>
        </thead>
        <tbody>
          {FILES.map(([name, date, type, size]) => (
            <tr key={name} className="h-[21px] leading-[21px]">
              <td className="p-0">
                <span className={"flex items-center text-[#f4f4f4] " + (size ? "gap-1 pl-[19px]" : "gap-[5px] pl-[21px]")}>
                  {size ? <BmpIcon /> : <Folder />}{name}
                </span>
              </td>
              <td className="p-0 pl-[6px]">{date}</td>
              <td className="p-0 pl-[6px]">{type}</td>
              <td className="p-0 pr-2 text-right">{size}</td>
              <td className="p-0" />
            </tr>
          ))}
        </tbody>
      </table>
    </div>
  );
}

const TYPES = [
  "单色位图 (*.bmp;*.dib)",
  "16色位图 (*.bmp;*.dib)",
  "256 色位图 (*.bmp;*.dib)",
  "24位位图 (*.bmp;*.dib)",
  "JPEG (*.jpg;*.jpeg;*.jpe;*.jfif)",
  "GIF (*.gif)",
  "TIFF (*.tif;*.tiff)",
  "PNG (*.png)",
  "HEIC (*.heic)",
];

function SaveForm() {
  const [name, setName] = useState("我记得.bmp");
  const [type, setType] = useState(TYPES[0]);
  return (
    <form className="relative bg-[#383838] pb-[13px] pr-[5px] pt-[11px] text-[#f4f4f4]">
      <div className="flex items-center gap-[5px]">
        <label htmlFor="file-name" className="w-[120px] text-right">文件名(<u>N</u>):</label>
        <div className="relative flex-1">
          <input id="file-name" value={name} onChange={(e) => setName(e.target.value)} className="block h-[25px] w-full border border-[#9b9b9b] bg-[#383838] pb-[2px] pl-[2px] outline-none" />
          <Chevron dir="down" width={1.200} className="absolute right-1 top-2 text-[#c0c0c0]" />
        </div>
      </div>
      <div className="mt-[2px] flex items-center gap-[5px]">
        <label htmlFor="file-type" className="w-[120px] text-right">保存类型(<u>T</u>):</label>
        <div className="relative flex-1">
          <select id="file-type" value={type} onChange={(e) => setType(e.target.value)} className="block h-[25px] w-full appearance-none border border-[#9b9b9b] bg-[#666666] pl-[2px] outline-none">
            {TYPES.map((t) => <option key={t}>{t}</option>)}
          </select>
          <Chevron dir="down" width={1.200} className="absolute right-1 top-2 text-[#c0c0c0]" />
          <ul role="listbox" aria-label="保存类型" className="absolute inset-x-0 top-full z-10 border border-[#0078d7] bg-[#383838] shadow-[3px_3px_3px_rgba(0,0,0,0.5)]">
            {TYPES.map((t) => (
              <li key={t} role="option" aria-selected={t === type} onClick={() => setType(t)} className={"flex h-[17px] items-center whitespace-nowrap pl-[2px] " + (t === type ? "bg-[#0078d7] outline-1 -outline-offset-1 outline-dotted outline-[#e08a3c]" : "")}>{t}</li>
            ))}
          </ul>
        </div>
      </div>
      <button type="button" className="ml-3 mt-[25px] flex h-[18px] items-center gap-2"><Chevron dir="up" className="text-[#d0d0d0]" />隐藏文件夹</button>
      <svg viewBox="0 0 8 8" className="absolute bottom-[2px] right-[2px] h-2 w-2" fill="#9a9a9a" aria-hidden="true">
        <path d="M6 0h2v2H6zM3 3h2v2H3zM6 3h2v2H6zM0 6h2v2H0zM3 6h2v2H3zM6 6h2v2H6z" />
      </svg>
    </form>
  );
}

function SaveDialog() {
  return (
    <div role="dialog" aria-label="保存为" className="absolute left-[148px] right-3 top-[188px] border border-[#6f7174] shadow-[0_4px_18px_rgba(0,0,0,0.4)]">
      <div className="flex h-[30px] items-center bg-black pl-2 pr-[10px] text-white">
        <PaletteIcon />
        <h2 className="ml-[5px]">保存为</h2>
        <button type="button" aria-label="关闭" className="ml-auto">
          <svg viewBox="0 0 11 11" className="h-[11px] w-[11px]" stroke="#fff" strokeWidth="1.300" aria-hidden="true"><path d="M.5.5l10 10M10.500.5l-10 10" /></svg>
        </button>
      </div>
      <AddressBar />
      <Toolbar />
      <div className="flex h-[308px]">
        <Sidebar />
        <FileList />
      </div>
      <SaveForm />
    </div>
  );
}

export default function App() {
  return (
    <div className={"relative flex min-h-screen flex-col overflow-hidden text-[12px] leading-[18px] " + FONT}>
      <TitleBar />
      <Tabs />
      <Ribbon />
      <Canvas />
      <SaveDialog />
      <div className="absolute bottom-[8px] right-4 z-20 font-['Roboto','Noto_Sans_CJK_SC',sans-serif] text-[15px] leading-5 text-[#b9bcc0] [text-shadow:1px_1px_1px_rgba(0,0,0,0.6)]">CSDN @Cui杰西</div>
    </div>
  );
}
